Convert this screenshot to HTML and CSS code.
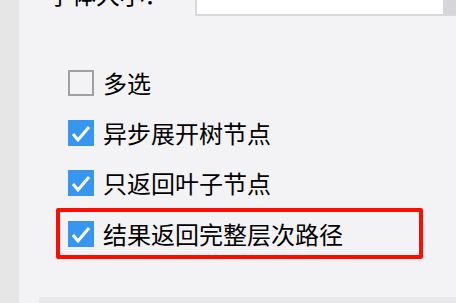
FILE: index.html
```html
<!DOCTYPE html>
<html lang="zh-CN">
<head>
  <meta charset="UTF-8" />
  <meta name="viewport" content="width=device-width, initial-scale=1.0"/>
  <title>树设置</title>
  <link rel="stylesheet" href="styles.css">
</head>
<body>
  <div class="panel">
    <div class="field-row">
      <span class="field-label">字体大小：</span>
      <div class="field-input">
        <span class="field-value">12</span>
        <span class="field-spin"></span>
      </div>
    </div>

    <div class="options">
      <label class="option">
        <span class="box"></span>
        <span class="option-text">多选</span>
      </label>
      <label class="option">
        <span class="box checked">
          <svg viewBox="0 0 26 26"><polyline points="5,14 10,20 21,7" /></svg>
        </span>
        <span class="option-text">异步展开树节点</span>
      </label>
      <label class="option">
        <span class="box checked">
          <svg viewBox="0 0 26 26"><polyline points="5,14 10,20 21,7" /></svg>
        </span>
        <span class="option-text">只返回叶子节点</span>
      </label>
      <label class="option highlight">
        <span class="box checked">
          <svg viewBox="0 0 26 26"><polyline points="5,14 10,20 21,7" /></svg>
        </span>
        <span class="option-text">结果返回完整层次路径</span>
      </label>
    </div>

    <div class="footer-bar"></div>
  </div>
</body>
</html>
```

FILE: styles.css
```css
body {
  margin: 0;
  background: #e6e6e6;
  font-family: "Noto Sans CJK SC", "Noto Sans", sans-serif;
  color: #000;
  height: 303px;
  overflow: hidden;
}

.panel {
  margin-left: 19px;
  height: 303px;
  background: #f3f3f5;
  display: flex;
  flex-direction: column;
}

/* top row, mostly scrolled out of view */
.field-row {
  display: flex;
  height: 16px;
  padding-left: 29px;
}

.field-label {
  width: 147px;
  font-size: 24px;
  line-height: 24px;
  margin-top: -18px;
  white-space: nowrap;
}

.field-input {
  flex: 1;
  display: flex;
  box-sizing: border-box;
  height: 16px;
  border-left: 2px solid #d8d8dc;
  border-bottom: 2px solid #d8d8dc;
  background: #fff;
  overflow: hidden;
}

.field-value {
  flex: 1;
  padding-left: 8px;
  font-family: "Liberation Sans", sans-serif;
  font-size: 18px;
  line-height: 18px;
  margin-top: -15px;
}

.field-spin {
  width: 13px;
  background: #d6d6da;
}

.options {
  display: flex;
  flex-direction: column;
  margin-top: 42px;
  margin-left: 37px;
}

.option {
  display: flex;
  align-items: center;
  gap: 9px;
  box-sizing: border-box;
  width: 367px;
  height: 50px;
  padding: 0 8px;
  border: 4px solid transparent;
  border-radius: 2px;
}

.option.highlight {
  border-color: #ff0c00;
  height: 51px;
}

.box {
  box-sizing: border-box;
  width: 26px;
  height: 26px;
  border: 2px solid #a0a0a0;
  flex-shrink: 0;
}

.box.checked {
  border: none;
  background: #3796ef;
}

.box svg {
  display: block;
  width: 26px;
  height: 26px;
}

.box polyline {
  fill: none;
  stroke: #fff;
  stroke-width: 3;
}

.option-text {
  font-size: 24px;
  line-height: 26px;
  white-space: nowrap;
}

.footer-bar {
  margin-top: auto;
  margin-left: 20px;
  height: 6px;
  background: #e8e8ea;
}
```
